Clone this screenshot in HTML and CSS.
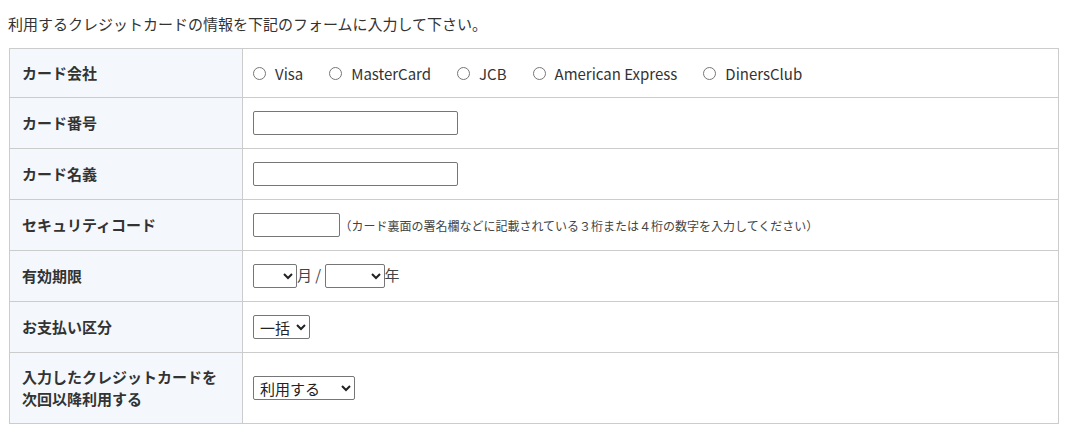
FILE: index.html
```html
<!DOCTYPE html>
<html lang="ja">
<head>
    <meta charset="UTF-8">
    <meta name="viewport" content="width=device-width, initial-scale=1.0">
    <title>クレジットカード情報の入力</title>
    <link rel="stylesheet" href="styles.css">
</head>
<body>
    <div class="container">
        <p class="lead">利用するクレジットカードの情報を下記のフォームに入力して下さい。</p>

        <table class="card-form">
            <tr class="first">
                <th>カード会社</th>
                <td>
                    <div class="radio-group">
                        <label><input type="radio" name="brand"> Visa</label>
                        <label><input type="radio" name="brand"> MasterCard</label>
                        <label><input type="radio" name="brand"> JCB</label>
                        <label><input type="radio" name="brand"> American Express</label>
                        <label><input type="radio" name="brand"> DinersClub</label>
                    </div>
                </td>
            </tr>
            <tr>
                <th>カード番号</th>
                <td><input type="text" class="text-long"></td>
            </tr>
            <tr>
                <th>カード名義</th>
                <td><input type="text" class="text-long"></td>
            </tr>
            <tr>
                <th>セキュリティコード</th>
                <td>
                    <input type="text" class="text-short">
                    <span class="note">（カード裏面の署名欄などに記載されている３桁または４桁の数字を入力してください）</span>
                </td>
            </tr>
            <tr>
                <th>有効期限</th>
                <td class="expire">
                    <select class="sel-month"><option></option></select>月 / <select class="sel-year"><option></option></select>年
                </td>
            </tr>
            <tr>
                <th>お支払い区分</th>
                <td><select class="sel-pay"><option>一括</option></select></td>
            </tr>
            <tr class="tall">
                <th>入力したクレジットカードを<br>次回以降利用する</th>
                <td><select class="sel-save"><option>利用する</option><option>利用しない</option></select></td>
            </tr>
        </table>
    </div>
</body>
</html>
```

FILE: styles.css
```css
* {
    box-sizing: border-box;
}

body {
    margin: 0;
    font-family: 'Noto Sans CJK JP', 'Noto Sans', sans-serif;
    color: #333;
    background: #fff;
}

.container {
    padding: 0 10px 0 8px;
}

.lead {
    margin: 0;
    padding-top: 14px;
    font-size: 15px;
    line-height: 20px;
}

.card-form {
    width: 1050px;
    margin-top: 14px;
    margin-left: 1px;
    border-collapse: collapse;
    font-size: 15px;
}

.card-form th,
.card-form td {
    border: 1px solid #ccc;
    height: 51px;
    vertical-align: middle;
}

.card-form th {
    width: 233px;
    padding: 0 12px;
    text-align: left;
    font-weight: bold;
    line-height: 22px;
    background: #f4f8fc;
}

.card-form td {
    padding: 0 10px;
}

.card-form tr.first th,
.card-form tr.first td {
    height: 49px;
}

.card-form tr.tall th,
.card-form tr.tall td {
    height: 71px;
}

.radio-group {
    display: flex;
    gap: 26px;
    align-items: center;
}

.radio-group label {
    display: flex;
    align-items: center;
    gap: 9px;
}

.radio-group input {
    margin: 0;
    width: 13px;
    height: 13px;
}

input[type="text"] {
    height: 24px;
    border: 1px solid #767676;
    border-radius: 2px;
    vertical-align: middle;
}

.text-long {
    width: 205px;
}

.text-short {
    width: 87px;
}

.note {
    font-size: 12px;
    color: #444;
    margin-left: -4px;
    vertical-align: middle;
}

select {
    height: 24px;
    font-family: 'Noto Sans CJK JP', sans-serif;
    font-size: 15px;
    color: #222;
    border: 1px solid #767676;
    border-radius: 2px;
    background: #fff;
    vertical-align: middle;
    padding: 0 2px;
}

.expire {
    color: #444;
}

.sel-month {
    width: 44px;
}

.sel-year {
    width: 60px;
}

.sel-pay {
    width: 57px;
}

.sel-save {
    width: 102px;
}
```
